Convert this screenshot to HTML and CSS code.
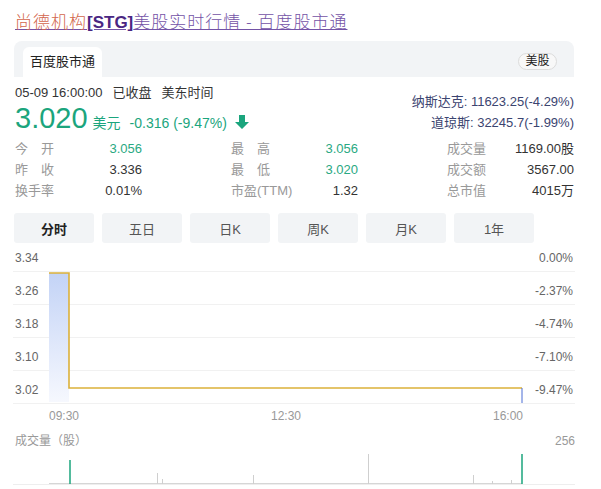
FILE: index.html
```html
<!DOCTYPE html>
<html lang="zh-CN">
<head>
    <meta charset="UTF-8">
    <meta name="viewport" content="width=device-width, initial-scale=1.0">
    <title>尚德机构[STG]美股实时行情 - 百度股市通</title>
    <link rel="stylesheet" href="styles.css">
</head>
<body>
    <div class="page">
        <h1 class="title"><a href="#"><em>尚德机构</em><b>[STG]</b>美股实时行情 - 百度股市通</a></h1>

        <div class="card-head">
            <span class="card-tab">百度股市通</span>
            <span class="market-tag">美股</span>
        </div>

        <div class="quote">
            <div class="quote-main">
                <div class="quote-time">05-09 16:00:00<span>已收盘</span><span>美东时间</span></div>
                <div class="quote-price">
                    <span class="price">3.020</span>
                    <span class="unit">美元</span>
                    <span class="change">-0.316 (-9.47%)</span>
                    <svg class="arrow" width="14" height="14" viewBox="0 0 14 14">
                        <path d="M4 0h6v7h4l-7 7-7-7h4z" fill="#1ba57d"/>
                    </svg>
                </div>
            </div>
            <div class="indexes">
                <div>纳斯达克: 11623.25(-4.29%)</div>
                <div>道琼斯: 32245.7(-1.99%)</div>
            </div>
        </div>

        <div class="stats">
            <div class="stat"><span class="label">今开</span><span class="val down">3.056</span></div>
            <div class="stat"><span class="label">最高</span><span class="val down">3.056</span></div>
            <div class="stat"><span class="label">成交量</span><span class="val">1169.00股</span></div>
            <div class="stat"><span class="label">昨收</span><span class="val">3.336</span></div>
            <div class="stat"><span class="label">最低</span><span class="val down">3.020</span></div>
            <div class="stat"><span class="label">成交额</span><span class="val">3567.00</span></div>
            <div class="stat"><span class="label">换手率</span><span class="val">0.01%</span></div>
            <div class="stat"><span class="label">市盈(TTM)</span><span class="val">1.32</span></div>
            <div class="stat"><span class="label">总市值</span><span class="val">4015万</span></div>
        </div>

        <div class="periods">
            <button class="period-btn active">分时</button>
            <button class="period-btn">五日</button>
            <button class="period-btn">日K</button>
            <button class="period-btn">周K</button>
            <button class="period-btn">月K</button>
            <button class="period-btn">1年</button>
        </div>

        <div class="chart-wrap">
            <div class="chart">
                <div class="chart-row"><span>3.34</span><span>0.00%</span></div>
                <div class="chart-row"><span>3.26</span><span>-2.37%</span></div>
                <div class="chart-row"><span>3.18</span><span>-4.74%</span></div>
                <div class="chart-row"><span>3.10</span><span>-7.10%</span></div>
                <div class="chart-row"><span>3.02</span><span>-9.47%</span></div>
                <svg class="chart-line" viewBox="0 0 562 161" preserveAspectRatio="none">
                    <defs>
                        <linearGradient id="area" x1="0" y1="0" x2="0" y2="1">
                            <stop offset="0" stop-color="#c3d3f6"/>
                            <stop offset="1" stop-color="#f6f8fe"/>
                        </linearGradient>
                    </defs>
                    <rect x="36" y="30" width="20" height="129" fill="url(#area)"/>
                    <polyline points="36,30 56,30 56,145 509,145" fill="none" stroke="#dbb13a" stroke-width="1.6"/>
                    <line x1="509" y1="145" x2="509" y2="160" stroke="#4a6cd4" stroke-width="1"/>
                </svg>
            </div>

            <div class="axis-x">
                <span>09:30</span><span>12:30</span><span>16:00</span>
            </div>

            <div class="vol-head"><span>成交量（股）</span><span>256</span></div>
            <svg class="vol-bars" width="562" height="31" viewBox="0 0 562 31">
                <line x1="0" y1="30.5" x2="562" y2="30.5" stroke="#eeeeee"/>
                <line x1="36" y1="29.5" x2="509" y2="29.5" stroke="#d6d6d6"/>
                <g stroke="#cfcfcf" stroke-width="1">
                    <line x1="144.5" y1="19" x2="144.5" y2="30"/>
                    <line x1="149.5" y1="25" x2="149.5" y2="30"/>
                    <line x1="240.5" y1="21" x2="240.5" y2="30"/>
                    <line x1="355.5" y1="0" x2="355.5" y2="30"/>
                    <line x1="460.5" y1="21" x2="460.5" y2="30"/>
                    <line x1="479.5" y1="27" x2="479.5" y2="30"/>
                    <line x1="498.5" y1="26" x2="498.5" y2="30"/>
                </g>
                <g stroke="#1ba57d" stroke-width="1.5">
                    <line x1="57" y1="6" x2="57" y2="30"/>
                    <line x1="509" y1="0" x2="509" y2="30"/>
                </g>
            </svg>
        </div>
    </div>
</body>
</html>
```

FILE: styles.css
```css
:root {
    --green: #1ba57d;
    --tab-bg: #f2f4f6;
    --muted: #999;
}

body {
    margin: 0;
    font-family: "Liberation Sans", "Noto Sans CJK SC", sans-serif;
    color: #333;
    background: #fff;
}

.page {
    width: 560px;
    padding: 0 27px 0 14px;
}

/* 标题 */
.title {
    margin: 0;
    padding: 10px 0 0 1px;
    font-size: 17px;
    line-height: 22px;
    font-weight: 300;
    letter-spacing: 1px;
    font-family: "Noto Sans CJK SC", sans-serif;
}

.title a {
    color: #7352a6;
    text-decoration: underline;
}

.title em {
    font-style: normal;
    color: #d2664c;
}

.title b {
    font-family: "Liberation Sans", sans-serif;
    font-weight: bold;
    letter-spacing: 0;
    color: #4a2682;
}

/* 卡片头 */
.card-head {
    margin-top: 7px;
    height: 36px;
    background: var(--tab-bg);
    border-radius: 8px 8px 0 0;
    display: flex;
    justify-content: space-between;
    align-items: flex-end;
    padding: 0 17px 0 9px;
}

.card-tab {
    width: 79px;
    height: 30px;
    line-height: 30px;
    text-align: center;
    background: #fff;
    border-radius: 6px 6px 0 0;
    font-size: 13px;
    color: #222;
}

.market-tag {
    align-self: flex-start;
    margin-top: 12px;
    width: 37px;
    height: 15px;
    line-height: 15px;
    text-align: center;
    font-size: 12px;
    color: #222;
    background: #f8f8f8;
    border: 1px solid #dcdcdc;
    border-radius: 9px;
}

/* 报价 */
.quote {
    display: flex;
    justify-content: space-between;
    margin-top: 8px;
    padding-left: 1px;
}

.quote-time {
    font-size: 13px;
    line-height: 16px;
    height: 16px;
    white-space: nowrap;
}

.quote-time span {
    margin-left: 10px;
}

.quote-price {
    display: flex;
    align-items: baseline;
    height: 34px;
    color: var(--green);
}

.price {
    font-size: 29px;
    line-height: 34px;
}

.unit {
    font-size: 14px;
    margin-left: 5px;
}

.change {
    font-size: 14px;
    margin-left: 9px;
}

.arrow {
    align-self: flex-end;
    margin: 0 0 6px 8px;
}

.indexes {
    padding-top: 6px;
    text-align: right;
    font-size: 13px;
    line-height: 21px;
    color: #3b4470;
}

/* 指标 */
.stats {
    display: grid;
    grid-template-columns: repeat(3, 127px);
    justify-content: space-between;
    margin-top: 3px;
    padding-left: 1px;
}

.stat {
    display: flex;
    justify-content: space-between;
    height: 21px;
    line-height: 21px;
    font-size: 13px;
    white-space: nowrap;
}

.stat .label {
    width: 39px;
    flex-shrink: 0;
    color: var(--muted);
    text-align: justify;
    text-align-last: justify;
}

.stat .val.down {
    color: #2aa982;
}

/* 周期切换 */
.periods {
    display: flex;
    gap: 8px;
    margin-top: 12px;
}

.period-btn {
    width: 80px;
    height: 30px;
    padding: 0;
    border: none;
    border-radius: 3px;
    background: var(--tab-bg);
    font-family: inherit;
    font-size: 13px;
    color: #555;
    cursor: pointer;
}

.period-btn.active {
    font-weight: bold;
    color: #222;
}

/* 分时图 */
.chart-wrap {
    margin: 0 -1px;
}

.chart {
    position: relative;
}

.chart-row {
    display: flex;
    justify-content: space-between;
    align-items: flex-end;
    height: 33px;
    padding: 0 2px 6px;
    box-sizing: border-box;
    border-bottom: 1px solid #f1f1f1;
    font-size: 12px;
    line-height: 14px;
    color: #666;
}

.chart-row:first-child {
    height: 29px;
}

.chart-line {
    position: absolute;
    left: 0;
    top: 0;
    width: 100%;
    height: 100%;
}

.axis-x {
    display: flex;
    justify-content: space-between;
    padding: 0 52px 0 36px;
    height: 24px;
    line-height: 24px;
    font-size: 12px;
    color: #999;
}

.vol-head {
    display: flex;
    justify-content: space-between;
    margin-top: 5px;
    padding-left: 2px;
    font-size: 12px;
    line-height: 16px;
    color: var(--muted);
}

.vol-bars {
    display: block;
    margin-top: 5px;
}
```
